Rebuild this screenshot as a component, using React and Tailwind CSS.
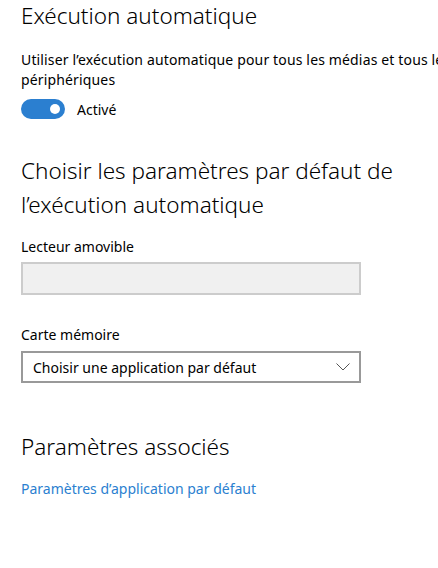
export default function App() {
  return (
    <div className="w-[438px] h-[568px] bg-white overflow-hidden pl-[21px] text-black" style={{ fontFamily: '"Noto Sans", "Open Sans", sans-serif' }}>
      {/* Exécution automatique */}
      <h1 className="pt-[1px] text-[22.5px] font-light leading-[30px] whitespace-nowrap">Exécution automatique</h1>
      <p className="mt-[19px] text-[14px] leading-[20px] whitespace-nowrap tracking-[0.15px]">
        Utiliser l’exécution automatique pour tous les médias et tous les
        <br />
        périphériques
      </p>
      <div className="mt-[9px] flex items-center gap-3 h-[20px]">
        <div className="w-[44px] h-[20px] rounded-full bg-[#2b7fd0] flex items-center justify-end pr-[5px]">
          <div className="w-[10px] h-[10px] rounded-full bg-white" />
        </div>
        <span className="text-[14px]">Activé</span>
      </div>

      {/* Choisir les paramètres */}
      <h2 className="mt-[35px] text-[22.5px] font-light leading-[34px] w-[400px]">
        Choisir les paramètres par défaut de l’exécution automatique
      </h2>
      <div className="mt-[15px] text-[14px] leading-[20px]">Lecteur amovible</div>
      <div className="mt-[5px] w-[340px] h-[33px] bg-[#f0f0f0] border-2 border-[#cccccc]" />

      <div className="mt-[30px] text-[14px] leading-[20px]">Carte mémoire</div>
      <div className="mt-[6px] w-[340px] h-[32px] border-2 border-[#999999] flex items-center justify-between pl-[10px] pr-[9px]">
        <span className="text-[14px]">Choisir une application par défaut</span>
        <svg width="14" height="8" viewBox="0 0 14 8" fill="none" stroke="#555" strokeWidth="1">
          <path d="M0.5 0.5 L7 7 L13.5 0.5" />
        </svg>
      </div>

      {/* Paramètres associés */}
      <h2 className="mt-[49px] text-[22.5px] font-light leading-[30px]">Paramètres associés</h2>
      <a href="#" className="block mt-[17px] text-[14px] leading-[20px] text-[#2b7fd0]">Paramètres d’application par défaut</a>
    </div>
  );
}
